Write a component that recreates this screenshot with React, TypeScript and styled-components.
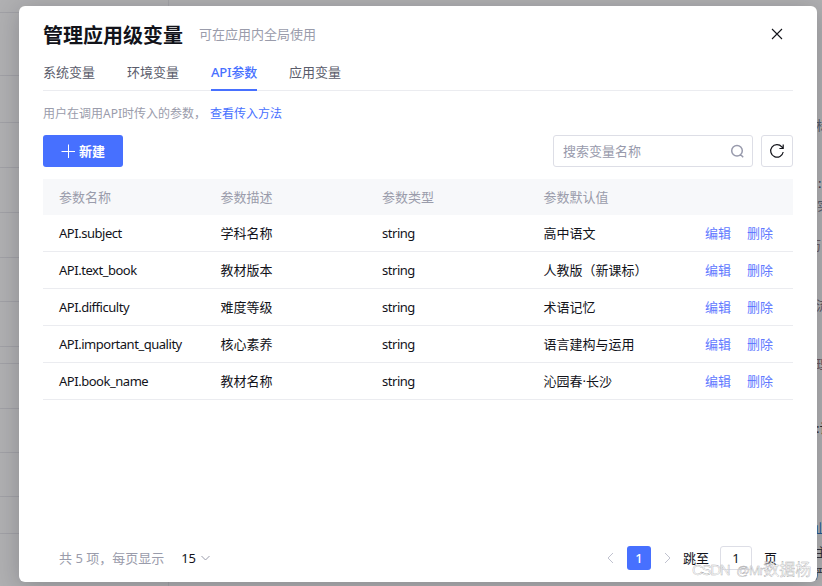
import React from "react";
import styled, { createGlobalStyle } from "styled-components";

const GlobalStyle = createGlobalStyle`
  * { box-sizing: border-box; }
  body { margin: 0; overflow: hidden; font-family: "Noto Sans", "Noto Sans CJK SC", sans-serif; font-size: 13px; color: #12131a; }
  button, input { font: inherit; color: inherit; }
  button { border: 0; background: none; padding: 0; }
`;

const Page = styled.main`
  position: relative;
  width: 822px;
  height: 586px;
  overflow: hidden;
  background: #b0b0b2;
`;

const Backdrop = styled.div`
  position: absolute;
  inset: 0;
`;

const BackRule = styled.i<{ $y: number }>`
  position: absolute;
  left: 0;
  top: ${(p) => p.$y}px;
  width: 60px;
  height: 1px;
  background: #a1a1a6;
`;

const BackDivider = styled.i`
  position: absolute;
  left: 168px;
  top: 0;
  bottom: 0;
  width: 1px;
  background: #a4a4a8;
`;

const BackText = styled.span<{ $x: number; $y: number; $color: string }>`
  position: absolute;
  left: ${(p) => p.$x}px;
  top: ${(p) => p.$y}px;
  font-size: 13px;
  line-height: 18px;
  white-space: nowrap;
  color: ${(p) => p.$color};
`;

const Dialog = styled.section`
  position: relative;
  display: flex;
  flex-direction: column;
  width: 798px;
  height: 576px;
  margin: 0 0 0 19px;
  top: 6px;
  padding: 16px 24px 12px;
  border-radius: 6px;
  background: #fff;
  box-shadow: 0 4px 24px rgba(20, 20, 30, 0.24);
`;

const Header = styled.header`
  display: flex;
  align-items: center;
  height: 26px;
`;

const Title = styled.h1`
  margin: 2px 0 0;
  font-size: 20px;
  line-height: 26px;
  font-weight: 700;
`;

const Subtitle = styled.span`
  margin: 0 0 2px 16px;
  line-height: 20px;
  color: #9a9cab;
`;

const CloseButton = styled.button`
  display: flex;
  margin: 0 10px 2px auto;
`;

const Tabs = styled.nav`
  display: flex;
  gap: 32px;
  height: 43px;
  padding-top: 14px;
  border-bottom: 1px solid #ebecf0;
`;

const Tab = styled.a<{ $active?: boolean }>`
  height: 29px;
  line-height: 20px;
  white-space: nowrap;
  color: ${(p) => (p.$active ? "#4770ff" : "#5a5c6b")};
  font-weight: ${(p) => (p.$active ? 500 : 400)};
  letter-spacing: ${(p) => (p.$active ? "-0.2px" : "0")};
  border-bottom: ${(p) => (p.$active ? "2px solid #4770ff" : "0")};
`;

const Hint = styled.p`
  display: flex;
  gap: 4px;
  margin: 13px 0 0;
  height: 20px;
  font-size: 12px;
  line-height: 20px;
  color: #9a9cab;
`;

const HintLink = styled.a`
  color: #4770ff;
`;

const Toolbar = styled.div`
  display: flex;
  gap: 8px;
  height: 32px;
  margin-top: 11px;
`;

const CreateButton = styled.button`
  display: flex;
  align-items: center;
  justify-content: center;
  gap: 4px;
  width: 80px;
  padding-bottom: 1px;
  border-radius: 3px;
  background: #4770ff;
  color: #fff;
  font-weight: 700;
`;

const SearchBox = styled.div`
  display: flex;
  align-items: center;
  justify-content: space-between;
  width: 200px;
  margin-left: auto;
  padding: 0 8px 1px 9px;
  border: 1px solid #dddee6;
  border-radius: 3px;
  color: #989aac;
`;

const RefreshButton = styled.button`
  display: flex;
  align-items: center;
  justify-content: center;
  width: 32px;
  border: 1px solid #dddee6;
  border-radius: 3px;
`;

const TableRow = styled.div<{ $head?: boolean }>`
  display: grid;
  grid-template-columns: 161.5px 161.5px 161.5px 161.5px 1fr;
  align-items: center;
  height: ${(p) => (p.$head ? 36 : 37)}px;
  padding-left: 16px;
  color: ${(p) => (p.$head ? "#9a9cab" : "#12131a")};
  background: ${(p) => (p.$head ? "#f7f8fa" : "transparent")};
  border-bottom: ${(p) => (p.$head ? "0" : "1px solid #ebecf0")};
`;

const Table = styled.div`
  margin-top: 12px;
`;

const Cell = styled.span<{ $latin?: boolean }>`
  line-height: 20px;
  white-space: nowrap;
  letter-spacing: ${(p) => (p.$latin ? "-0.47px" : "0")};
`;

const Actions = styled.span`
  display: flex;
  gap: 16px;
  line-height: 20px;
  color: #6179ff;
`;

const Footer = styled.footer`
  display: flex;
  align-items: center;
  height: 24px;
  margin-top: auto;
  padding-left: 16px;
`;

const Total = styled.span`
  color: #9a9cab;
  white-space: nowrap;
  line-height: 20px;
  padding-bottom: 1px;
`;

const PageSize = styled.span`
  display: flex;
  align-items: center;
  gap: 5px;
  margin-left: 17px;
  letter-spacing: -0.2px;
`;

const Pager = styled.div`
  display: flex;
  align-items: center;
  margin-left: auto;
  margin-right: 16px;
`;

const CurrentPage = styled.button`
  width: 24px;
  height: 24px;
  margin: 0 13px;
  border-radius: 3px;
  background: #4770ff;
  color: #fff;
  font-weight: 500;
`;

const JumpLabel = styled.span`
  margin-left: 12px;
  padding-bottom: 1px;
  line-height: 20px;
`;

const JumpInput = styled.span`
  width: 32px;
  height: 24px;
  margin-left: 11px;
  border: 1px solid #dddee6;
  border-radius: 3px;
  line-height: 22px;
  text-align: center;
`;

const Watermark = styled.div`
  position: absolute;
  left: 692px;
  top: 559px;
  display: flex;
  gap: 7px;
  line-height: 22px;
  font-size: 15px;
  letter-spacing: -1.3px;
  white-space: nowrap;
  font-family: "Liberation Sans", "Noto Sans CJK SC", sans-serif;
  color: rgba(255, 255, 255, 0.75);
  -webkit-text-stroke: 0.4px rgba(130, 130, 134, 0.7);
`;

const WatermarkName = styled.span`
  font-size: 16px;
  letter-spacing: 0;
`;

const WatermarkHandle = styled.span`
  display: inline-block;
  width: 27px;
  font-size: 13.5px;
  letter-spacing: -0.9px;
`;

const backRules = [12, 75, 122, 167, 212, 257, 301, 346, 363, 408, 452, 496, 533];

const backTexts = [
  { text: "标", x: 816, y: 116, color: "#555b6b" },
  { text: ":", x: 818, y: 174, color: "#30354a" },
  { text: "实", x: 817, y: 196, color: "#555b6b" },
  { text: "历", x: 808, y: 236, color: "#6c5d65" },
  { text: "流", x: 816, y: 296, color: "#5b5562" },
  { text: "理", x: 816, y: 355, color: "#6b5961" },
  { text: ":计", x: 816, y: 419, color: "#24242c" },
  { text: "仙", x: 812, y: 519, color: "#1f568e" },
  { text: "主", x: 815, y: 543, color: "#30303a" },
  { text: "严", x: 815, y: 564, color: "#30303a" },
];

const tabs = ["系统变量", "环境变量", "API参数", "应用变量"];
const columns = ["参数名称", "参数描述", "参数类型", "参数默认值"];
const rows = [
  ["API.subject", "学科名称", "string", "高中语文"],
  ["API.text_book", "教材版本", "string", "人教版（新课标）"],
  ["API.difficulty", "难度等级", "string", "术语记忆"],
  ["API.important_quality", "核心素养", "string", "语言建构与运用"],
  ["API.book_name", "教材名称", "string", "沁园春·长沙"],
];

type IconProps = { d: string; w: number; h: number; color?: string; stroke?: number };

const LineIcon = ({ d, w, h, color = "currentColor", stroke = 1 }: IconProps) => (
  <svg width={w} height={h} viewBox={`0 0 ${w} ${h}`} fill="none" stroke={color} strokeWidth={stroke}>
    <path d={d} />
  </svg>
);

export default function App() {
  return (
    <Page>
      <GlobalStyle />
      <Backdrop>
        {backRules.map((y) => (
          <BackRule key={y} $y={y} />
        ))}
        <BackDivider />
        {backTexts.map((t) => (
          <BackText key={t.text} $x={t.x} $y={t.y} $color={t.color}>
            {t.text}
          </BackText>
        ))}
      </Backdrop>
      <Dialog>
        <Header>
          <Title>管理应用级变量</Title>
          <Subtitle>可在应用内全局使用</Subtitle>
          <CloseButton aria-label="关闭">
            <LineIcon w={12} h={12} d="M1 1L11 11M11 1L1 11" stroke={1.1} />
          </CloseButton>
        </Header>
        <Tabs>
          {tabs.map((t) => (
            <Tab key={t} $active={t === "API参数"}>
              {t}
            </Tab>
          ))}
        </Tabs>
        <Hint>
          <span>用户在调用API时传入的参数，</span>
          <HintLink>查看传入方法</HintLink>
        </Hint>
        <Toolbar>
          <CreateButton>
            <LineIcon w={14} h={14} d="M7.5 0.5V14M0.5 7.5H14" />
            新建
          </CreateButton>
          <SearchBox>
            <span>搜索变量名称</span>
            <LineIcon w={14} h={14} d="M12.3 6.8A5.3 5.3 0 1 1 1.7 6.8A5.3 5.3 0 1 1 12.3 6.8M10.5 10.5L13.2 13.2" stroke={1.5} />
          </SearchBox>
          <RefreshButton aria-label="刷新">
            <LineIcon w={16} h={16} d="M14.2 9A6.3 6.3 0 1 1 12.8 3.8L14.3 5.5M14.2 1.6V5.5H10.4" stroke={1.2} />
          </RefreshButton>
        </Toolbar>
        <Table>
          <TableRow $head>
            {columns.map((c) => (
              <Cell key={c}>{c}</Cell>
            ))}
          </TableRow>
          {rows.map((r) => (
            <TableRow key={r[0]}>
              {r.map((c, i) => (
                <Cell key={i} $latin={i % 2 === 0}>
                  {c}
                </Cell>
              ))}
              <Actions>
                <span>编辑</span>
                <span>删除</span>
              </Actions>
            </TableRow>
          ))}
        </Table>
        <Footer>
          <Total>共 5 项，每页显示</Total>
          <PageSize>
            15
            <LineIcon w={9} h={6} d="M0.5 1L4.5 5L8.5 1" color="#9a9cab" />
          </PageSize>
          <Pager>
            <LineIcon w={7} h={12} d="M6 1L1 6L6 11" color="#c0c2cf" />
            <CurrentPage>1</CurrentPage>
            <LineIcon w={7} h={12} d="M1 1L6 6L1 11" color="#c0c2cf" />
            <JumpLabel>跳至</JumpLabel>
            <JumpInput>1</JumpInput>
            <JumpLabel>页</JumpLabel>
          </Pager>
        </Footer>
      </Dialog>
      <Watermark>
        <span>CSDN</span>
        <WatermarkName>
          <WatermarkHandle>@Mr</WatermarkHandle>数据杨
        </WatermarkName>
      </Watermark>
    </Page>
  );
}
